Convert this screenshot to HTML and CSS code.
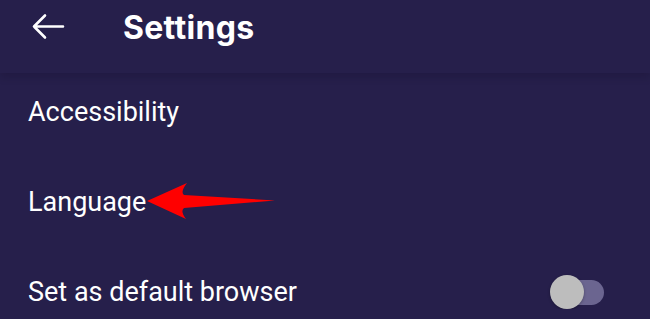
FILE: index.html
```html
<!DOCTYPE html>
<html lang="en">
<head>
    <meta charset="UTF-8">
    <meta name="viewport" content="width=device-width, initial-scale=1.0">
    <title>Settings</title>
    <link rel="stylesheet" href="styles.css">
</head>
<body>

    <div class="toolbar">
        <svg class="back-icon" width="34" height="30" viewBox="0 0 34 30">
            <path d="M3 14.5 H32 M14 3.5 L3 14.5 L14 25.5" fill="none" stroke="#ffffff" stroke-width="2.6" stroke-linecap="round" stroke-linejoin="round"/>
        </svg>
        <h1 class="toolbar-title">Settings</h1>
    </div>

    <div class="settings-list">
        <div class="settings-row">
            <span class="row-label">Accessibility</span>
        </div>
        <div class="settings-row">
            <span class="row-label">Language</span>
            <svg class="callout-arrow" width="134" height="42" viewBox="0 0 134 42">
                <path d="M1 20 L41 2 Q34 11 38 14 L129 19.5 L38 27 Q34 30 40 38 Z" fill="#ff0000"/>
            </svg>
        </div>
        <div class="settings-row">
            <span class="row-label">Set as default browser</span>
            <div class="toggle">
                <div class="toggle-track"></div>
                <div class="toggle-thumb"></div>
            </div>
        </div>
    </div>

</body>
</html>
```

FILE: styles.css
```css
body {
    margin: 0;
    background-color: #261f4b;
    font-family: Roboto, "Liberation Sans", sans-serif;
    color: #ffffff;
    overflow: hidden;
}

.toolbar {
    height: 73px;
    display: flex;
    align-items: center;
    background-color: #261f4b;
    box-shadow: 0 4px 8px rgba(10, 6, 30, 0.18);
    position: relative;
    z-index: 1;
}

.back-icon {
    margin-left: 31px;
    margin-top: -19px;
}

.toolbar-title {
    margin: -19px 0 0 58px;
    font-family: Inter, "Open Sans", sans-serif;
    font-size: 32px;
    font-weight: 700;
    letter-spacing: 0.3px;
}

.settings-list {
    padding: 22px 46px 0 28px;
    display: flex;
    flex-direction: column;
    gap: 56px;
}

.settings-row {
    min-height: 34px;
    display: flex;
    align-items: center;
    justify-content: space-between;
    position: relative;
}

.row-label {
    font-size: 27px;
    line-height: 30px;
}

.callout-arrow {
    position: absolute;
    left: 118px;
    top: -4px;
}

.toggle {
    position: relative;
    width: 54px;
    height: 34px;
}

.toggle-track {
    position: absolute;
    left: 4px;
    right: 0;
    top: 5px;
    height: 25px;
    border-radius: 13px;
    background-color: #6b6590;
}

.toggle-thumb {
    position: absolute;
    left: 0;
    top: 0;
    width: 34px;
    height: 34px;
    border-radius: 50%;
    background-color: #bdbdbd;
    box-shadow: 0 1px 3px rgba(0, 0, 0, 0.3);
}
```
